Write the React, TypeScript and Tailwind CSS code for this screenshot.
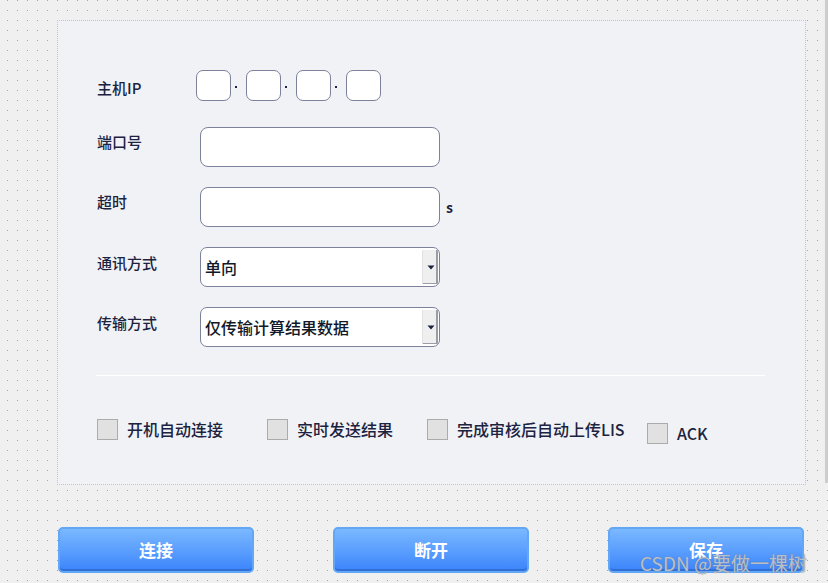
const font = { fontFamily: '"Noto Sans CJK SC", "Noto Sans", sans-serif' }

const Label = ({ text, width, pt }: { text: string; width: string; pt: string }) => (
  <div className={`${width} ${pt} shrink-0 text-[15px] leading-[20px] font-medium text-[#1c2340]`}>{text}</div>
)

const IpBox = () => <div className="w-[35px] h-[31px] rounded-[7px] border border-[#7d8199] bg-white" />

const IpDot = () => (
  <div className="w-[15px] h-[31px] flex justify-center">
    <div className="mt-[16px] ml-[-6px] w-[2px] h-[2px] bg-[#1c2340]" />
  </div>
)

const Combo = ({ value }: { value: string }) => (
  <div className="w-[240px] h-[40px] rounded-[7px] border border-[#7d8199] bg-white flex overflow-hidden">
    <div className="flex-1 pl-[4px] flex items-center text-[16px] font-medium text-[#111827]">{value}</div>
    <div className="w-[16px] my-[2px] mr-[1px] bg-[#efefef] border-l border-[#e2e2e2] shadow-[inset_-2px_-1px_0_#9a9ca6] flex items-center justify-center">
      <svg width="8" height="5" viewBox="0 0 8 5">
        <path d="M0.5 0.5 L7.5 0.5 L4 4.5 Z" fill="#1c2340" />
      </svg>
    </div>
  </div>
)

const Check = ({ text, width, mt = '' }: { text: string; width: string; mt?: string }) => (
  <div className={`${width} ${mt} flex items-center shrink-0`}>
    <div className="w-[21px] h-[21px] bg-[#e1e1e1] border border-[#ababab]" />
    <span className="ml-[9px] text-[16px] font-medium text-[#1c2340]">{text}</span>
  </div>
)

const Btn = ({ text }: { text: string }) => (
  <button className="w-[196px] h-[46px] rounded-[5px] border-2 border-[#62a7f6] bg-gradient-to-b from-[#7bb8ff] to-[#3b84fb] shadow-[inset_0_-2px_0_#2f6fd6] text-white text-[17px] font-bold flex items-center justify-center">
    {text}
  </button>
)

export default function App() {
  return (
    <div
      style={font}
      className="relative w-[828px] h-[583px] overflow-hidden bg-[#a3a3a3] bg-[linear-gradient(90deg,transparent_1px,#f0f0f0_1px),linear-gradient(180deg,transparent_1px,#f0f0f0_1px)] bg-[size:10px_10px] bg-[position:7px_0px]"
    >
      <div className="ml-[57px] mt-[20px] w-[749px] h-[465px] border border-dotted border-[#c4c4c4] bg-[#f1f2f6] pl-[39px] pt-[49px]">
        {/* 主机IP */}
        <div className="flex items-start h-[31px]">
          <Label text="主机IP" width="w-[99px]" pt="pt-[8px]" />
          <IpBox />
          <IpDot />
          <IpBox />
          <IpDot />
          <IpBox />
          <IpDot />
          <IpBox />
        </div>

        <div className="flex items-start mt-[26px]">
          <Label text="端口号" width="w-[103px]" pt="pt-[5px]" />
          <div className="w-[240px] h-[40px] rounded-[8px] border border-[#7d8199] bg-white" />
        </div>

        <div className="flex items-start mt-[20px]">
          <Label text="超时" width="w-[103px]" pt="pt-[5px]" />
          <div className="w-[240px] h-[40px] rounded-[8px] border border-[#7d8199] bg-white" />
          <span className="ml-[6px] mt-[10px] text-[14px] font-bold text-[#1c2340]">s</span>
        </div>

        <div className="flex items-start mt-[20px]">
          <Label text="通讯方式" width="w-[103px]" pt="pt-[6px]" />
          <Combo value="单向" />
        </div>

        <div className="flex items-start mt-[20px]">
          <Label text="传输方式" width="w-[103px]" pt="pt-[6px]" />
          <Combo value="仅传输计算结果数据" />
        </div>

        <div className="mt-[28px] w-[669px] h-px bg-white ml-[-1px]" />

        <div className="flex items-start mt-[41px]">
          <Check text="开机自动连接" width="w-[170px]" />
          <Check text="实时发送结果" width="w-[160px]" />
          <Check text="完成审核后自动上传LIS" width="w-[220px]" />
          <Check text="ACK" width="w-[100px]" mt="mt-[4px]" />
        </div>
      </div>

      <div className="flex ml-[58px] mt-[42px] gap-[79px]">
        <Btn text="连接" />
        <Btn text="断开" />
        <Btn text="保存" />
      </div>

      <div className="absolute right-0 top-0 w-[3px] h-[483px] bg-[#cdcdcd]" />
      <div className="absolute left-[640px] top-[549px] text-[19px] text-[#b8c0cc] [text-shadow:0_0_1px_#6f747d]">
        CSDN @要做一棵树
      </div>
    </div>
  )
}
